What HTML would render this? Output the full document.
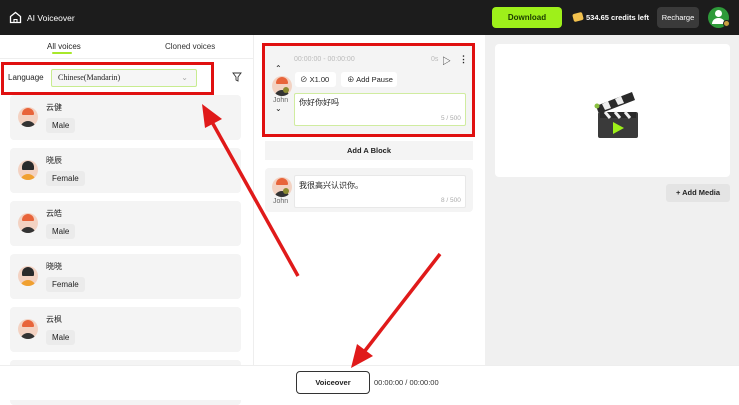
<!DOCTYPE html><html><head><style>
*{box-sizing:border-box;margin:0;padding:0}
body{width:739px;height:400px;overflow:hidden;font-family:"Liberation Sans","Noto Sans CJK SC",sans-serif;background:#fff;position:relative;font-size:8px;color:#222}
.abs{position:absolute}
.hdr{left:0;top:0;width:739px;height:35px;background:#1c1c1c}
.card{position:absolute;left:10px;width:231px;height:45px;background:#f4f4f4;border-radius:4px}
.card .nm{position:absolute;left:36px;top:7px;font-size:8px}
.card .tag{position:absolute;left:36px;top:23px;background:#ebebeb;padding:3px 6px;font-size:8px;border-radius:3px}
.av{position:absolute;width:20px;height:20px;border-radius:50%;background:#f3d2c2;overflow:hidden}
.av:before{content:"";position:absolute;left:4px;top:1px;width:12px;height:7px;background:#e8643a;border-radius:6px 6px 1px 1px}
.av:after{content:"";position:absolute;left:2px;top:14px;width:16px;height:8px;background:#333;border-radius:8px 8px 0 0}
.avf:before{background:#2a2a2a;height:9px}
.avf:after{background:#f0a030}
</style></head><body>
<div class="abs hdr"></div>
<svg class="abs" style="left:9px;top:11px" width="13" height="13" viewBox="0 0 13 13"><path d="M1.5 5.5L6.5 1.5 11.5 5.5V11.5H1.5Z" fill="none" stroke="#fff" stroke-width="1.3"/><path d="M5 11.5V8.5H8V11.5" fill="none" stroke="#fff" stroke-width="1.1"/></svg>
<div class="abs" style="left:27px;top:13px;color:#fff;font-size:8.5px">AI Voiceover</div>
<div class="abs" style="left:492px;top:7px;width:70px;height:21px;background:#9ef01a;border-radius:4px;text-align:center;line-height:21px;font-weight:bold;font-size:8px;color:#1a3a00">Download</div>
<div class="abs" style="left:573px;top:13px;width:10px;height:8px;background:#f2c14e;border-radius:2px;transform:rotate(-15deg)"></div>
<div class="abs" style="left:586px;top:13px;color:#fff;font-size:7.5px;font-weight:bold">534.65 credits left</div>
<div class="abs" style="left:657px;top:7px;width:42px;height:21px;background:#3a3a3a;border-radius:4px;color:#fff;text-align:center;line-height:21px;font-size:7.5px">Recharge</div>
<div class="abs" style="left:708px;top:7px;width:21px;height:21px;border-radius:50%;background:#2e9a3a"></div>
<div class="abs" style="left:715px;top:10px;width:7px;height:7px;border-radius:50%;background:#fff"></div>
<div class="abs" style="left:712px;top:18px;width:13px;height:6px;border-radius:6px 6px 0 0;background:#fff"></div>
<div class="abs" style="left:723px;top:20px;width:7px;height:7px;border-radius:50%;background:#c8a040;border:1px solid #222"></div>

<!-- left panel -->
<div class="abs" style="left:47px;top:42px;font-size:8px">All voices</div>
<div class="abs" style="left:52px;top:52px;width:20px;height:2px;background:#a8e82a;border-radius:2px"></div>
<div class="abs" style="left:165px;top:42px;font-size:8px;color:#333">Cloned voices</div>
<div class="abs" style="left:0;top:58px;width:253px;height:1px;background:#eee"></div>
<div class="abs" style="left:8px;top:73px;font-size:8px">Language</div>
<div class="abs" style="left:51px;top:69px;width:146px;height:18px;border:1px solid #c8ec90;background:#f6f6f6;border-radius:2px;font-family:'Liberation Serif',serif;font-size:8px;line-height:16px;padding-left:6px">Chinese(Mandarin)<span style="position:absolute;right:8px;color:#aaa">⌄</span></div>
<div class="abs" style="left:1px;top:62px;width:213px;height:33px;border:3px solid #e01010"></div>
<svg class="abs" style="left:232px;top:72px" width="10" height="10" viewBox="0 0 10 10"><path d="M1 1H9L6 5V9L4 8V5Z" fill="none" stroke="#333" stroke-width="0.9"/></svg>
<div class="card" style="top:95px"><div class="av" style="left:8px;top:12px"></div><div class="nm">云健</div><div class="tag">Male</div></div>
<div class="card" style="top:148px"><div class="av avf" style="left:8px;top:12px"></div><div class="nm">晓辰</div><div class="tag">Female</div></div>
<div class="card" style="top:201px"><div class="av" style="left:8px;top:12px"></div><div class="nm">云皓</div><div class="tag">Male</div></div>
<div class="card" style="top:254px"><div class="av avf" style="left:8px;top:12px"></div><div class="nm">晓晓</div><div class="tag">Female</div></div>
<div class="card" style="top:307px"><div class="av" style="left:8px;top:12px"></div><div class="nm">云枫</div><div class="tag">Male</div></div>
<div class="card" style="top:360px"></div>
<div class="abs" style="left:253px;top:35px;width:1px;height:330px;background:#eee"></div>

<!-- middle -->
<div class="abs" style="left:265px;top:46px;width:208px;height:88px;background:#f4f4f4"></div>
<div class="abs" style="left:294px;top:56px;font-size:7px;color:#bbb">00:00:00 - 00:00:00</div>
<div class="abs" style="left:431px;top:56px;font-size:7px;color:#bbb">0s</div>
<div class="abs" style="left:442px;top:54px;font-size:9px">▷</div>
<div class="abs" style="left:459px;top:54px;font-size:9px;font-weight:bold">⋮</div>
<div class="abs" style="left:275px;top:64px;font-size:8px">⌃</div>
<div class="av" style="left:272px;top:76px"></div>
<div class="abs" style="left:283px;top:87px;width:6px;height:6px;border-radius:50%;background:#8a8a30"></div>
<div class="abs" style="left:273px;top:97px;font-size:7px;color:#666">John</div>
<div class="abs" style="left:275px;top:104px;font-size:8px">⌄</div>
<div class="abs" style="left:295px;top:72px;width:41px;height:15px;background:#fff;border-radius:3px;font-size:7.5px;line-height:15px;padding-left:5px">⊘ X1.00</div>
<div class="abs" style="left:341px;top:72px;width:56px;height:15px;background:#fff;border-radius:3px;font-size:7.5px;line-height:15px;padding-left:6px">⊕ Add Pause</div>
<div class="abs" style="left:294px;top:93px;width:172px;height:33px;background:#fff;border:1px solid #d0eca0;border-radius:2px"></div>
<div class="abs" style="left:299px;top:97px;font-size:8px">你好你好吗</div>
<div class="abs" style="left:441px;top:115px;font-size:6.5px;color:#aaa">5 / 500</div>
<div class="abs" style="left:262px;top:43px;width:213px;height:94px;border:3px solid #e01010"></div>
<div class="abs" style="left:265px;top:141px;width:208px;height:19px;background:#f4f4f4;text-align:center;line-height:19px;font-size:7.5px;font-weight:bold">Add A Block</div>
<div class="abs" style="left:265px;top:168px;width:208px;height:44px;background:#f4f4f4;border-radius:4px"></div>
<div class="av" style="left:272px;top:177px"></div>
<div class="abs" style="left:283px;top:188px;width:6px;height:6px;border-radius:50%;background:#8a8a30"></div>
<div class="abs" style="left:273px;top:198px;font-size:7px;color:#666">John</div>
<div class="abs" style="left:294px;top:175px;width:172px;height:33px;background:#fff;border:1px solid #e8e8e8;border-radius:2px"></div>
<div class="abs" style="left:299px;top:180px;font-size:8px">我很高兴认识你。</div>
<div class="abs" style="left:441px;top:197px;font-size:6.5px;color:#aaa">8 / 500</div>

<!-- right -->
<div class="abs" style="left:485px;top:35px;width:254px;height:330px;background:#f0f0f0"></div>
<div class="abs" style="left:495px;top:44px;width:235px;height:133px;background:#fff;border-radius:4px"></div>
<svg class="abs" style="left:588px;top:82px" width="60" height="58" viewBox="0 0 60 58"><path d="M8 24L44 10 47 18 11 32Z" fill="#2a2a2a"/><path d="M14 22L20 19 23 26 17 28ZM27 17L33 14 36 21 30 23Z" fill="#eee"/><rect x="10" y="30" width="40" height="26" rx="2" fill="#3a3a3a"/><path d="M12 30H48V36H12Z" fill="#2a2a2a"/><path d="M17 30L22 36M27 30L32 36M37 30L42 36" stroke="#eee" stroke-width="3"/><path d="M25 40L36 46 25 52Z" fill="#9ef01a"/><circle cx="9" cy="24" r="2.5" fill="#8ac040"/></svg>
<div class="abs" style="left:666px;top:184px;width:64px;height:18px;background:#e4e4e4;border-radius:3px;font-size:7.5px;font-weight:bold;line-height:18px;text-align:center">+ Add Media</div>

<!-- bottom -->
<div class="abs" style="left:0;top:365px;width:739px;height:35px;background:#fff;border-top:1px solid #eee"></div>
<div class="abs" style="left:296px;top:371px;width:74px;height:23px;border:1px solid #333;border-radius:4px;text-align:center;line-height:21px;font-size:7.5px;font-weight:bold">Voiceover</div>
<div class="abs" style="left:374px;top:378px;font-size:7.5px;color:#333">00:00:00 / 00:00:00</div>

<!-- arrows -->
<svg class="abs" style="left:0;top:0" width="739" height="400"><g stroke="#e01a1a" stroke-width="3.5" fill="#e01a1a"><line x1="298" y1="276" x2="212" y2="122"/><path d="M202 104L222 119 205 128Z" stroke="none"/><line x1="440" y1="254" x2="364" y2="352"/><path d="M351 368L357 344 373 356Z" stroke="none"/></g></svg>
</body></html>
